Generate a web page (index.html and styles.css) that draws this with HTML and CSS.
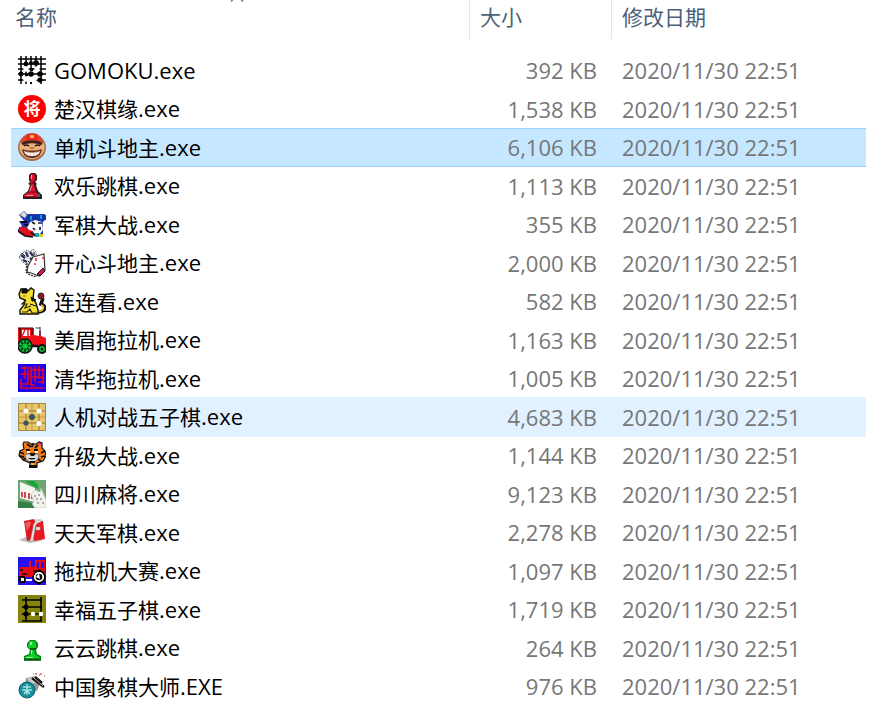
FILE: index.html
```
<!DOCTYPE html>
<html lang="zh-CN">
<head>
    <meta charset="UTF-8">
    <meta name="viewport" content="width=device-width, initial-scale=1.0">
    <title>文件列表</title>
    <link rel="stylesheet" href="styles.css">
</head>
<body>
    <table class="file-list">
        <colgroup>
            <col>
            <col class="col-size">
            <col class="col-date">
        </colgroup>
        <thead>
            <tr>
                <th aria-sort="ascending">
                    <button type="button" class="sort-button">名称</button>
                    <svg class="sort-arrow" viewBox="0 0 14 8"><path d="M1 7.5 7 1.5 13 7.5" fill="none" stroke="#777" stroke-width="1.4"/></svg>
                </th>
                <th><button type="button" class="sort-button">大小</button></th>
                <th><button type="button" class="sort-button">修改日期</button></th>
            </tr>
        </thead>
        <tbody>
            <tr>
                <td><div class="file">
                    <svg class="icon" viewBox="0 0 28 28">
                        <path d="M3 0v28M8 0v28M13 0v15M18 0v15M23 0v28M0 3h28M0 8h28M0 13h28M0 18h28M0 24h9M18 24h10" stroke="#000" stroke-width="1.5"/>
                        <g fill="#000"><circle cx="8" cy="8" r="2.4"/><circle cx="13" cy="7" r="2"/><circle cx="18" cy="7" r="2.8"/><circle cx="13" cy="18" r="2.8"/><circle cx="3" cy="18" r="2.4"/><circle cx="22" cy="18" r="2.8"/><circle cx="22" cy="24" r="2.6"/></g>
                        <g fill="#fff"><circle cx="8" cy="13" r="2.7"/><circle cx="19" cy="13" r="2.7"/><circle cx="8" cy="23" r="2.8"/><circle cx="17" cy="22" r="2.6"/></g>
                        <path d="M12 12h3v3h-3zM7 18h3v2H7zM12 26h2v2h-2z"/>
                    </svg>
                    <span>GOMOKU.exe</span>
                </div></td>
                <td>392 KB</td>
                <td>2020/11/30 22:51</td>
            </tr>
            <tr>
                <td><div class="file">
                    <svg class="icon" viewBox="0 0 28 28">
                        <circle cx="14" cy="14" r="14" fill="#f00"/>
                        <text class="icon-text" x="14" y="20" text-anchor="middle">将</text>
                    </svg>
                    <span><span class="stem">楚汉棋缘</span>.exe</span>
                </div></td>
                <td>1,538 KB</td>
                <td>2020/11/30 22:51</td>
            </tr>
            <tr class="selected">
                <td><div class="file">
                    <svg class="icon" viewBox="0 0 28 28">
                        <ellipse cx="14" cy="14.5" rx="14" ry="13.5" fill="#a66b42"/>
                        <ellipse cx="14" cy="14" rx="12.5" ry="12" fill="#e9b27c"/>
                        <path d="M2 10C4 3 9 0 14 0s10 3 12 10c-6-3-18-3-24 0z" fill="#d94430"/>
                        <path d="M9 1h10l1 6H8z" fill="#ef2818"/>
                        <path d="M12 2h4v3h-4z" fill="#ffb060"/>
                        <path d="M4 11c5-3 15-3 20 0" fill="none" stroke="#432018" stroke-width="3"/>
                        <path d="M6 13q2-2 5 0M17 13q3-2 5 0" fill="none" stroke="#281818" stroke-width="1.6"/>
                        <path d="M4 16c5 2 15 2 20 0-1 7-5 9-10 9s-9-2-10-9z" fill="#6c3522"/>
                        <path d="M6 18c4 2 12 2 16 0-1 4-4 5-8 5s-7-1-8-5z" fill="#fff"/>
                        <path d="M9 18v4M12 19v4M16 19v4M19 18v4" stroke="#caa18a" stroke-width=".7"/>
                        <path d="M12 15h4" stroke="#c27848" stroke-width="2"/>
                    </svg>
                    <span><span class="stem">单机斗地主</span>.exe</span>
                </div></td>
                <td>6,106 KB</td>
                <td>2020/11/30 22:51</td>
            </tr>
            <tr>
                <td><div class="file">
                    <svg class="icon" viewBox="0 0 28 28">
                        <path d="M13 1h4l2 2v5l-2 2 2 2-1 1 2 6 4 4v4H5v-4l5-4 2-6-2-1 2-2-1-2V3z" fill="#222"/>
                        <path d="M13 2h3l1 2v4l-2 2 1 3 2 7 4 3v2H6v-2l5-3 2-7-1-3 1-1-1-4z" fill="#e0122c"/>
                        <path d="M13 3h1v4h-1zM13 14h1l-2 6h-1zM8 23h7v1H8z" fill="#ff9b9b"/>
                        <path d="M12 11h6M11 20h9M7 25h15" stroke="#6c0014" stroke-width="1"/>
                        <path d="M19 22h3v3h-3z" fill="#365a70"/>
                    </svg>
                    <span><span class="stem">欢乐跳棋</span>.exe</span>
                </div></td>
                <td>1,113 KB</td>
                <td>2020/11/30 22:51</td>
            </tr>
            <tr>
                <td><div class="file">
                    <svg class="icon" viewBox="0 0 28 28">
                        <path d="M1 5 6 1l3 3h18v6l-2 2v14H13L0 22v-3l4-3-3-5h5z" fill="#2339b8"/>
                        <path d="M2 5 6 1l3 4-2 3z" fill="#ddd" stroke="#888" stroke-width=".6"/>
                        <path d="M9 5h19v5H17l-3 3H8z" fill="#1034a8"/>
                        <path d="M2 11h7v2H4zM6 14h7v2H7z" fill="#050510"/>
                        <path d="m12 12 5-2 7 2 1 8-4 5-8-3-4-4z" fill="#f8f8ff"/>
                        <path d="m14 12 3 2M20 13h4M15 18l2 2M22 17v3" stroke="#222" stroke-width="1.7"/>
                        <path d="m1 17 6 0 4 3 4 1 2 5-7 1-9-4z" fill="#e01018"/>
                        <path d="M0 21l7 5 8 1M13 22l4 4" fill="none" stroke="#111" stroke-width="1.6"/>
                        <path d="M17 23h4v4h-4z" fill="#12a8a0"/>
                        <path d="M21 24h4v3h-4z" fill="#e8c820"/>
                        <path d="M12 6h2v4h-2zM22 5h2v4h-2z" fill="#18a0c8"/>
                    </svg>
                    <span><span class="stem">军棋大战</span>.exe</span>
                </div></td>
                <td>355 KB</td>
                <td>2020/11/30 22:51</td>
            </tr>
            <tr>
                <td><div class="file">
                    <svg class="icon" viewBox="0 0 28 28">
                        <path d="m1 8 3-4 5-3 3 2 3-3 3 3 1 8-3 8-7-2-5-5z" fill="#eee" stroke="#666" stroke-dasharray="2 1"/>
                        <path d="m3 6 4 3M8 3l2 5M12 3l3 4M5 11l4 2M12 9l4 3" stroke="#25305a" stroke-width="2.2"/>
                        <path d="m4 4 3 3M10 12l3 3M16 3v4" stroke="#111" stroke-width="1"/>
                        <path d="m15 8 11-3 1 16-6 6-8-3-4-1 1-6z" fill="#fff" stroke="#333" stroke-width="1.2"/>
                        <path d="m9 14-1 9 4 3 7 2" fill="none" stroke="#222" stroke-width="1.2" stroke-dasharray="2 1"/>
                        <path d="M18 9v3M25 8v2M16 15h2" stroke="#f04040" stroke-width="1.7"/>
                        <path d="m19 25 6-6 2 3-5 5z" fill="#d4145c" stroke="#111"/>
                    </svg>
                    <span><span class="stem">开心斗地主</span>.exe</span>
                </div></td>
                <td>2,000 KB</td>
                <td>2020/11/30 22:51</td>
            </tr>
            <tr>
                <td><div class="file">
                    <svg class="icon" viewBox="0 0 28 28">
                        <path d="M19 25c9 0 10-6 4-8l2-6" fill="none" stroke="#111" stroke-width="3.5"/>
                        <path d="M19 24c7 1 8-5 4-6" fill="none" stroke="#e4c220" stroke-width="1.7"/>
                        <circle cx="23" cy="9" r="3" fill="#8b1824" stroke="#222"/>
                        <path d="M3 2h5l2 2 3-3 3 2-1 9 3 4 2 7v4H2v-4l4-5 1-5-5-2-1-4z" fill="#f2df36" stroke="#111" stroke-width="1.4"/>
                        <path d="M4 2h5v4H4zM13 10l5 3-4 1zM12 17l6 2" fill="#111" stroke="#111"/>
                        <path d="m8 13-4 4h5l-2 4 6-2M4 25h5l3-3 2 4h5" fill="none" stroke="#332600" stroke-width="1.2"/>
                        <path d="M5 9h3" stroke="#c85a20"/>
                    </svg>
                    <span><span class="stem">连连看</span>.exe</span>
                </div></td>
                <td>582 KB</td>
                <td>2020/11/30 22:51</td>
            </tr>
            <tr>
                <td><div class="file">
                    <svg class="icon" viewBox="0 0 28 28">
                        <path d="M0 2h16v7l5 1V5h2v5l5 2v9H8L0 18z" fill="#f01018"/>
                        <path d="M0 2h15M2 2v12M14 3v6" stroke="#300" stroke-width="1.2"/>
                        <path d="M4 4h8v6H4z" fill="#fff"/>
                        <path d="m4 10 3-6M10 4v6" stroke="#f01018" stroke-width="1.5"/>
                        <path d="M17 1h5v2h-4z" fill="#9ab"/><path d="M22 1v9" stroke="#446" stroke-width="1.2"/>
                        <circle cx="7" cy="20" r="7" fill="#05b936" stroke="#111" stroke-width="1.5"/>
                        <path d="M7 14v12M1 20h12M3 16l8 8M11 16l-8 8" stroke="#111" stroke-width="1.2"/>
                        <circle cx="7" cy="20" r="2.5" fill="#05d03c"/>
                        <path d="M13 20h7" stroke="#111" stroke-width="2.5"/>
                        <circle cx="24" cy="23" r="4" fill="#07bd39" stroke="#111" stroke-width="2"/>
                        <circle cx="24" cy="23" r="1.2"/>
                    </svg>
                    <span><span class="stem">美眉拖拉机</span>.exe</span>
                </div></td>
                <td>1,163 KB</td>
                <td>2020/11/30 22:51</td>
            </tr>
            <tr>
                <td><div class="file">
                    <svg class="icon" viewBox="0 0 28 28">
                        <path d="M0 0h28v28H0z" fill="#2000f0"/>
                        <path d="M3 4h8M7 2v13M2 10h9M3 20h7M3 15v9h23M10 6v15M13 3v18h4M13 6h13M17 2v16M21 2v13M25 4v16M13 13h13M20 18h6" fill="none" stroke="#e00828" stroke-width="1.6"/>
                    </svg>
                    <span><span class="stem">清华拖拉机</span>.exe</span>
                </div></td>
                <td>1,005 KB</td>
                <td>2020/11/30 22:51</td>
            </tr>
            <tr class="hovered">
                <td><div class="file">
                    <svg class="icon" viewBox="0 0 28 28">
                        <path d="M.5.5h27v27H.5z" fill="#e5c66c" stroke="#ab8838"/>
                        <path d="M8 1v26M21 1v26M1 8h26M1 20h26M14 1v26M1 14h26" stroke="#c39c44" stroke-width="1"/>
                        <path d="M8 1v26M21 1v26M1 8h26M1 20h26" stroke="#a98430" stroke-width="1"/>
                        <g fill="#fff"><circle cx="8" cy="8" r="2.6"/><circle cx="21" cy="8" r="2.6"/><circle cx="21" cy="20.500" r="2.6"/></g>
                        <g fill="#3c5158"><circle cx="14" cy="14" r="3"/><circle cx="8" cy="20" r="2.600"/></g>
                    </svg>
                    <span><span class="stem">人机对战五子棋</span>.exe</span>
                </div></td>
                <td>4,683 KB</td>
                <td>2020/11/30 22:51</td>
            </tr>
            <tr>
                <td><div class="file">
                    <svg class="icon" viewBox="0 0 28 28">
                        <path d="M6 1h4l3 2h5l3-2 3 1v5l3 3 1 5-3 5-6 2v4h-7v-4l-7-3-4-5 1-4 4-2-1-5z" fill="#f47c18" stroke="#111" stroke-width="1.2"/>
                        <path d="m9 3 4 3M15 2l-1 4M20 4l-3 3M2 11l4 2M1 15l5 1M23 12l4-2M23 16l4-1M8 9h4M16 9h4M5 19l3-2M23 20l-3-2" stroke="#111" stroke-width="1.8"/>
                        <path d="M7 14c3-2 11-2 14 0l-1 4c-3 4-9 4-12 0z" fill="#dcdcdc" stroke="#444" stroke-width=".7"/>
                        <path d="M9 10h3v2H9zM17 10h3v2h-3z" fill="#fff"/>
                        <path d="M11 12h7l-2 3h-3zM10 17q4 3 8 0M12 20h5v2h-5zM11 24h8v3h-8z" fill="#111"/>
                        <path d="M21 2h2v2h-2z" fill="#f012d0"/>
                        <path d="M13 22h3v2h-3z" fill="#f0c030"/>
                    </svg>
                    <span><span class="stem">升级大战</span>.exe</span>
                </div></td>
                <td>1,144 KB</td>
                <td>2020/11/30 22:51</td>
            </tr>
            <tr>
                <td><div class="file">
                    <svg class="icon" viewBox="0 0 28 28">
                        <path d="M0 0h28v28H0z" fill="#6aa870"/>
                        <path d="M0 21 28 25v3H0z" fill="#347f45"/>
                        <path d="m2 2 15 6v14L2 18z" fill="#f7f7f2"/>
                        <path d="M7 1h9l4 4v4l-5-3z" fill="#16a638"/>
                        <path d="M4 12v5M7 12v6M11 13v6M14 14v5" stroke="#c62838" stroke-width="1.7"/>
                        <path d="m13 15 4-5 5 2 1-4 3 7 2 5v8H17l-3-4 2-3z" fill="#f2f2ef" stroke="#bbb" stroke-width=".6"/>
                        <g fill="#555"><circle cx="17" cy="16" r=".8"/><circle cx="21" cy="15" r=".8"/><circle cx="19" cy="19" r=".8"/><circle cx="23" cy="19" r=".8"/><circle cx="20" cy="23" r=".8"/><circle cx="25" cy="23" r=".8"/></g>
                    </svg>
                    <span><span class="stem">四川麻将</span>.exe</span>
                </div></td>
                <td>9,123 KB</td>
                <td>2020/11/30 22:51</td>
            </tr>
            <tr>
                <td><div class="file">
                    <svg class="icon" viewBox="0 0 28 28">
                        <path d="m1 22 9-4 17 1-4 4-11 2z" fill="#bbb"/>
                        <path d="M6 3 16 1l1 20-8 2z" fill="#d91820"/>
                        <path d="m16 2 9 1 2 18-11 2z" fill="#e61a20"/>
                        <path d="M16 1h7v3l-5 1z" fill="#ddd"/>
                        <path d="M23 4c-4 0-6 3-6 7l-2 11-3 2 3-14c0-5 3-8 8-8zM18 9h4v3h-4z" fill="#e9e9e9" stroke="#999" stroke-width=".5"/>
                        <path d="m7 5 5-2 1 3-4 7z" fill="#f15b58"/>
                    </svg>
                    <span><span class="stem">天天军棋</span>.exe</span>
                </div></td>
                <td>2,278 KB</td>
                <td>2020/11/30 22:51</td>
            </tr>
            <tr>
                <td><div class="file">
                    <svg class="icon" viewBox="0 0 28 28">
                        <path d="M0 0h28v28H0z" fill="#2510f0"/>
                        <path d="M2 10h9V4h2v6l4-1V3h10v17H1V12z" fill="#e70b13"/>
                        <path d="M19 5h2v6h-2zM23 5h3v6h-3z" fill="#2510f0"/>
                        <path d="M0 19h7v7H1zM17 15l4-3 5 3 2 5-2 5-5 3-5-3-2-5z" fill="#050505"/>
                        <path d="M2 13h3M4 17h5M15 14h4" stroke="#111" stroke-width="1.4"/>
                        <circle cx="21" cy="20" r="4.200" fill="none" stroke="#fff" stroke-width="1.8"/>
                        <path d="m21 16 1 6-4-2zM3 21h3v3H3zM8 22h6v2H8z" fill="#fff"/>
                    </svg>
                    <span><span class="stem">拖拉机大赛</span>.exe</span>
                </div></td>
                <td>1,097 KB</td>
                <td>2020/11/30 22:51</td>
            </tr>
            <tr>
                <td><div class="file">
                    <svg class="icon" viewBox="0 0 28 28">
                        <path d="M0 0h28v28H0z" fill="#84840c"/>
                        <path d="M8 2v24M23 2v24M4 5h20M4 12h20M4 19h20M4 26h20" stroke="#000" stroke-width="1.6"/>
                        <circle cx="8" cy="12" r="2.5"/><circle cx="8" cy="19" r="2.5"/>
                        <circle cx="15" cy="19" r="2.300" fill="#fff"/><circle cx="23" cy="19" r="2.300" fill="#fff"/>
                    </svg>
                    <span><span class="stem">幸福五子棋</span>.exe</span>
                </div></td>
                <td>1,719 KB</td>
                <td>2020/11/30 22:51</td>
            </tr>
            <tr>
                <td><div class="file">
                    <svg class="icon" viewBox="0 0 28 28">
                        <path d="M12 6h5l3 3v4l-2 3 1 4 4 2v4H6v-4l5-2 1-4-3-3V9z" fill="#078817"/>
                        <path d="M12 7h4l2 2v4l-2 3 1 5 4 2v1H7v-1l5-2 1-5-3-3v-3z" fill="#10cf28"/>
                        <path d="M12 8h2v3h-2zM13 16h1v4h-1zM8 23h7v1H8z" fill="#8bff91"/>
                        <path d="M12 15h6M6 26h17" stroke="#034a0b" stroke-width="1.4"/>
                    </svg>
                    <span><span class="stem">云云跳棋</span>.exe</span>
                </div></td>
                <td>264 KB</td>
                <td>2020/11/30 22:51</td>
            </tr>
            <tr>
                <td><div class="file">
                    <svg class="icon" viewBox="0 0 28 28">
                        <path d="m8 6 9-2 6 5-4 10-8-2-4-4z" fill="#999"/>
                        <path d="m9 6 7-1 4 5-7 2z" fill="#ccc"/>
                        <path d="m14 6 12 9M17 5l7 6" stroke="#111" stroke-width="2.500"/>
                        <path d="m15 5 10 9" stroke="#ddd" stroke-width=".8"/>
                        <path d="M15 2h1M18 1v2M21 3h1M23 1v2M26 4h1" stroke="#c34242" stroke-width="1.200"/>
                        <circle cx="9" cy="18" r="8" fill="#168f99" stroke="#08606d"/>
                        <path d="M9 12v11M5 15h8M4 18h10M6 22l3-4 3 4" fill="none" stroke="#a8e4e5" stroke-width="1.300"/>
                    </svg>
                    <span><span class="stem">中国象棋大师</span>.EXE</span>
                </div></td>
                <td>976 KB</td>
                <td>2020/11/30 22:51</td>
            </tr>
        </tbody>
    </table>
</body>
</html>
```
FILE: styles.css
```
body {
    margin: 0;
    padding: 0 12px 0 11px;
    background-color: #fff;
    font-family: "Open Sans", "Noto Sans CJK SC", sans-serif;
    font-size: 22px;
    color: #000;
}

.file-list {
    width: 100%;
    table-layout: fixed;
    border-collapse: separate;
    border-spacing: 0;
}

.col-size {
    width: 142px;
}

.col-date {
    width: 255px;
}

/* header */
th {
    position: relative;
    height: 39px;
    padding: 0 4px;
    text-align: left;
    vertical-align: top;
    font-weight: normal;
}

th + th {
    padding: 0 10px;
    border-left: 1px solid #e5e5e5;
}

.sort-button {
    display: block;
    padding: 0;
    border: none;
    background: none;
    font-family: inherit;
    font-size: 21px;
    line-height: 34px;
    color: #4c607a;
    cursor: pointer;
}

.sort-arrow {
    position: absolute;
    top: -6px;
    left: 50%;
    width: 14px;
    height: 8px;
    margin-left: -10px;
}

tbody::before {
    content: "";
    display: table-row;
    height: 12px;
}

/* rows */
td {
    height: 38px;
    padding: 0;
    line-height: 38px;
    white-space: nowrap;
    color: #777;
}

tr:nth-child(even) td {
    height: 39px;
}

td:nth-child(1) {
    padding-left: 7px;
    color: #000;
}

td:nth-child(2) {
    padding-right: 14px;
    text-align: right;
}

td:nth-child(3) {
    padding-left: 11px;
}

.file {
    display: flex;
    align-items: center;
    gap: 8px;
    height: 38px;
}

.icon {
    flex: none;
    width: 28px;
    height: 28px;
}

.icon-text {
    font-family: "Noto Sans CJK SC", sans-serif;
    font-size: 17px;
    font-weight: bold;
    fill: #fff;
}

.stem {
    font-size: 21px;
}

.selected {
    background-color: #c5e7ff;
    box-shadow: inset 0 1px #99d1ff, 0 1px #99d1ff;
}

.hovered {
    background-color: #e1f1ff;
    box-shadow: 0 1px #e1f1ff;
}
```
